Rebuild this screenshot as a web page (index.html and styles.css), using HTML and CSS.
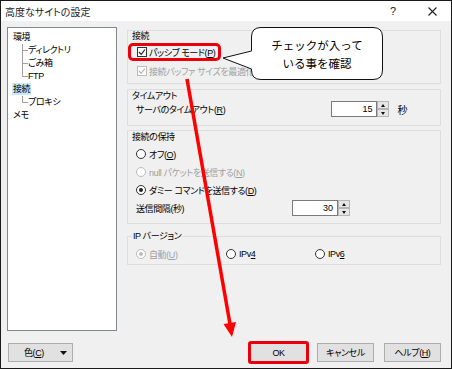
FILE: index.html
```html
<!DOCTYPE html>
<html lang="ja">
<head>
    <meta charset="UTF-8">
    <title>高度なサイトの設定</title>
    <link rel="stylesheet" href="styles.css">
</head>
<body>
    <div class="dialog">
        <div class="titlebar">
            <span class="title">高度なサイトの設定</span>
            <span class="help">?</span>
            <svg class="close" width="9" height="9" viewBox="0 0 9 9">
                <path d="M0.5 0.5 L8.5 8.5 M8.5 0.5 L0.5 8.5" stroke="#222" stroke-width="1.1" fill="none"/>
            </svg>
        </div>

        <div class="main">
            <div class="tree">
                <div class="node">環境</div>
                <div class="children">
                    <div class="leaf">ディレクトリ</div>
                    <div class="leaf">ごみ箱</div>
                    <div class="leaf">FTP</div>
                </div>
                <div class="node"><span class="selected">接続</span></div>
                <div class="children">
                    <div class="leaf">プロキシ</div>
                </div>
                <div class="node">メモ</div>
            </div>

            <div class="settings">
                <div class="group group-conn">
                    <div class="group-label">接続</div>
                    <div class="row check-row passive">
                        <span class="check">
                            <svg width="8" height="8" viewBox="0 0 8 8"><path d="M1 4 L3.2 6.3 L7 1.5" stroke="#222" stroke-width="1.2" fill="none"/></svg>
                        </span>
                        <span>パッシブ モード(<u>P</u>)</span>
                    </div>
                    <div class="row check-row disabled">
                        <span class="check">
                            <svg width="8" height="8" viewBox="0 0 8 8"><path d="M1 4 L3.2 6.3 L7 1.5" stroke="#b4b4b4" stroke-width="1.2" fill="none"/></svg>
                        </span>
                        <span>接続バッファ サイズを最適化(<u>B</u>)</span>
                    </div>
                </div>

                <div class="group group-timeout">
                    <div class="group-label">タイムアウト</div>
                    <div class="row spin-row timeout-row">
                        <span>サーバのタイムアウト(<u>R</u>)</span>
                        <div class="spin">
                            <div class="spin-value">15</div>
                            <div class="spin-btns">
                                <span class="spin-up"></span>
                                <span class="spin-down"></span>
                            </div>
                        </div>
                        <span class="unit">秒</span>
                    </div>
                </div>

                <div class="group group-keep">
                    <div class="group-label">接続の保持</div>
                    <div class="row radio-row first"><span class="radio"></span><span>オフ(<u>O</u>)</span></div>
                    <div class="row radio-row disabled"><span class="radio"></span><span>null パケットを送信する(<u>N</u>)</span></div>
                    <div class="row radio-row"><span class="radio checked"></span><span>ダミー コマンドを送信する(<u>D</u>)</span></div>
                    <div class="row spin-row interval-row">
                        <span>送信間隔(秒)</span>
                        <div class="spin">
                            <div class="spin-value">30</div>
                            <div class="spin-btns">
                                <span class="spin-up"></span>
                                <span class="spin-down"></span>
                            </div>
                        </div>
                    </div>
                </div>

                <fieldset class="ipver">
                    <legend>IP バージョン</legend>
                    <div class="ip-row">
                        <div class="radio-row disabled"><span class="radio checked"></span><span>自動(<u>U</u>)</span></div>
                        <div class="radio-row"><span class="radio"></span><span>IPv<u>4</u></span></div>
                        <div class="radio-row"><span class="radio"></span><span>IPv<u>6</u></span></div>
                    </div>
                </fieldset>
            </div>
        </div>

        <div class="footer">
            <div class="btn btn-color">
                <span>色(<u>C</u>)</span>
                <svg width="7" height="4" viewBox="0 0 7 4"><path d="M0 0 H7 L3.5 4 Z" fill="#111"/></svg>
            </div>
            <div class="buttons">
                <div class="btn btn-default">OK</div>
                <div class="btn">キャンセル</div>
                <div class="btn">ヘルプ(<u>H</u>)</div>
            </div>
        </div>
    </div>

    <!-- annotations drawn over the dialog -->
    <svg class="overlay" width="452" height="369" viewBox="0 0 452 369">
        <line x1="187" y1="79" x2="230" y2="324" stroke="#f00" stroke-width="3.5"/>
        <polygon points="232,337 236,322 223.5,324" fill="#f00"/>
        <path d="M261 27.5 H373 Q382.5 27.5 382.5 37 V70 Q382.5 79.5 373 79.5 H261 Q251.5 79.5 251.5 70 V69 L223 58 L251.5 51 V37 Q251.5 27.5 261 27.5 Z"
              fill="#fff" stroke="#111" stroke-width="1"/>
    </svg>
    <div class="callout-text">チェックが入って<br>いる事を確認</div>
</body>
</html>
```

FILE: styles.css
```css
body {
    margin: 0;
    position: relative;
    font-family: "Liberation Sans", "Noto Sans CJK JP", sans-serif;
    font-size: 9px;
    letter-spacing: -0.4px;
    font-feature-settings: "palt";
    color: #000;
}
u {
    text-decoration-thickness: 1px;
    text-underline-offset: 1px;
}

.dialog {
    width: 452px;
    height: 369px;
    box-sizing: border-box;
    border: 1px solid #1a1a1a;
    background-color: #f0f0f0;
    display: flex;
    flex-direction: column;
}

.titlebar {
    flex: none;
    height: 20px;
    background-color: #fff;
    display: flex;
    align-items: center;
    padding: 0 14px 0 4px;
    font-size: 10px;
    letter-spacing: 0;
    color: #222;
}
.help {
    margin-left: auto;
    font-size: 11px;
}
.close {
    margin-left: 32px;
}

.main {
    display: flex;
    gap: 10px;
    height: 310px;
    box-sizing: border-box;
    padding: 6px 0 0 6px;
}

/* tree on the left */
.tree {
    width: 110px;
    height: 304px;
    box-sizing: border-box;
    background-color: #fff;
    border: 1px solid #828790;
    padding: 3px 0 0 5px;
    line-height: 13px;
}
.children {
    margin-left: 9px;
}
.leaf {
    position: relative;
    padding-left: 6px;
}
.leaf::before {
    content: "";
    position: absolute;
    left: 0;
    top: 0;
    width: 5px;
    height: 6px;
    border-left: 1px solid #a0a0a0;
    border-bottom: 1px solid #a0a0a0;
}
.leaf:not(:last-child)::after {
    content: "";
    position: absolute;
    left: 0;
    top: 6px;
    bottom: 0;
    border-left: 1px solid #a0a0a0;
}
.selected {
    background-color: #cce8ff;
    padding: 1px 1px;
    margin-left: -1px;
}

/* right side */
.settings {
    width: 314px;
    padding-top: 3px;
    display: flex;
    flex-direction: column;
}
.group {
    border: 1px solid #dedede;
    padding: 0 0 0 4px;
}
.group-label {
    line-height: 12px;
}
.row {
    display: flex;
    align-items: center;
    height: 12px;
    padding-left: 4px;
}

.group-conn .group-label {
    line-height: 11px;
}
.group-conn {
    padding-bottom: 6px;
}
.check-row {
    padding-left: 5px;
    gap: 2px;
    white-space: nowrap;
}
.passive {
    width: fit-content;
    margin-top: 4px;
    margin-left: -1px;
    padding: 0 3px 0 6px;
    outline: 3px solid #e8000b;
    border-radius: 2px;
}
.passive + .check-row {
    margin-top: 7px;
}
.check {
    flex: none;
    width: 10px;
    height: 10px;
    box-sizing: border-box;
    border: 1px solid #333;
    background-color: #fff;
    display: flex;
    align-items: center;
    justify-content: center;
}
.disabled {
    color: #a0a0a0;
}
.disabled .check,
.disabled .radio {
    border-color: #bcbcbc;
}

.group-timeout {
    margin-top: 5px;
    padding-bottom: 8px;
}
.spin-row {
    height: 16px;
}
.timeout-row {
    margin-top: -1px;
    padding-right: 33px;
}
.timeout-row .spin {
    margin-left: auto;
}
.unit {
    margin-left: 8px;
    font-size: 10px;
}

.spin {
    display: flex;
    height: 16px;
}
.spin-value {
    box-sizing: border-box;
    width: 46px;
    border: 1px solid #7a7a7a;
    background-color: #fff;
    text-align: right;
    padding-right: 4px;
    line-height: 14px;
    letter-spacing: 0;
}
.spin-btns {
    width: 12px;
    display: flex;
    flex-direction: column;
}
.spin-up,
.spin-down {
    flex: 1;
    box-sizing: border-box;
    border: 1px solid #b5b5b5;
    background-color: #e6e6e6;
    display: flex;
    align-items: center;
    justify-content: center;
}
.spin-up::before {
    content: "";
    border-left: 2.5px solid transparent;
    border-right: 2.5px solid transparent;
    border-bottom: 3px solid #111;
}
.spin-down::before {
    content: "";
    border-left: 2.5px solid transparent;
    border-right: 2.5px solid transparent;
    border-top: 3px solid #111;
}

.group-keep {
    margin-top: 4px;
    padding-bottom: 7px;
}
.radio-row {
    display: flex;
    align-items: center;
    gap: 3px;
    margin-top: 6px;
    white-space: nowrap;
}
.radio-row.first {
    margin-top: 5px;
}
.radio {
    flex: none;
    width: 10px;
    height: 10px;
    box-sizing: border-box;
    border: 1px solid #333;
    border-radius: 50%;
    background-color: #fff;
    display: flex;
    align-items: center;
    justify-content: center;
}
.radio.checked::before {
    content: "";
    width: 4px;
    height: 4px;
    border-radius: 50%;
    background-color: #222;
}
.disabled .radio.checked::before {
    background-color: #bcbcbc;
}
.interval-row {
    margin-top: 4px;
    padding-right: 90px;
}
.interval-row .spin {
    margin-left: auto;
}

.ipver {
    margin: 6px 0 0 0;
    padding: 0 0 4px 4px;
    border: 1px solid #dedede;
    min-inline-size: 0;
}
.ipver legend {
    padding: 0 1px;
    line-height: 12px;
}
.ip-row {
    display: grid;
    grid-template-columns: 90px 89px auto;
    padding-left: 4px;
    height: 12px;
    margin-top: 6px;
}
.ip-row .radio-row {
    margin-top: 0;
    height: 12px;
}

/* bottom buttons */
.footer {
    display: flex;
    padding: 12px 10px 0 7px;
}
.buttons {
    margin-left: auto;
    display: flex;
    gap: 10px;
}
.btn {
    box-sizing: border-box;
    width: 57px;
    height: 19px;
    border: 1px solid #adadad;
    background-color: #e1e1e1;
    display: flex;
    align-items: center;
    justify-content: center;
}
.btn-color {
    width: 65px;
    justify-content: space-between;
    padding: 0 5px 0 15px;
}
.btn-default {
    border-color: #0078d7;
    outline: 3px solid #e8000b;
    outline-offset: -1px;
    border-radius: 1px;
}

/* annotations */
.overlay {
    position: absolute;
    left: 0;
    top: 0;
    pointer-events: none;
}
.callout-text {
    position: absolute;
    left: 251px;
    top: 27px;
    width: 132px;
    height: 53px;
    display: flex;
    align-items: center;
    justify-content: center;
    text-align: center;
    font-family: "Noto Sans CJK JP", sans-serif;
    font-size: 11.5px;
    line-height: 18px;
    letter-spacing: 0;
    font-feature-settings: normal;
    color: #000;
}
```
